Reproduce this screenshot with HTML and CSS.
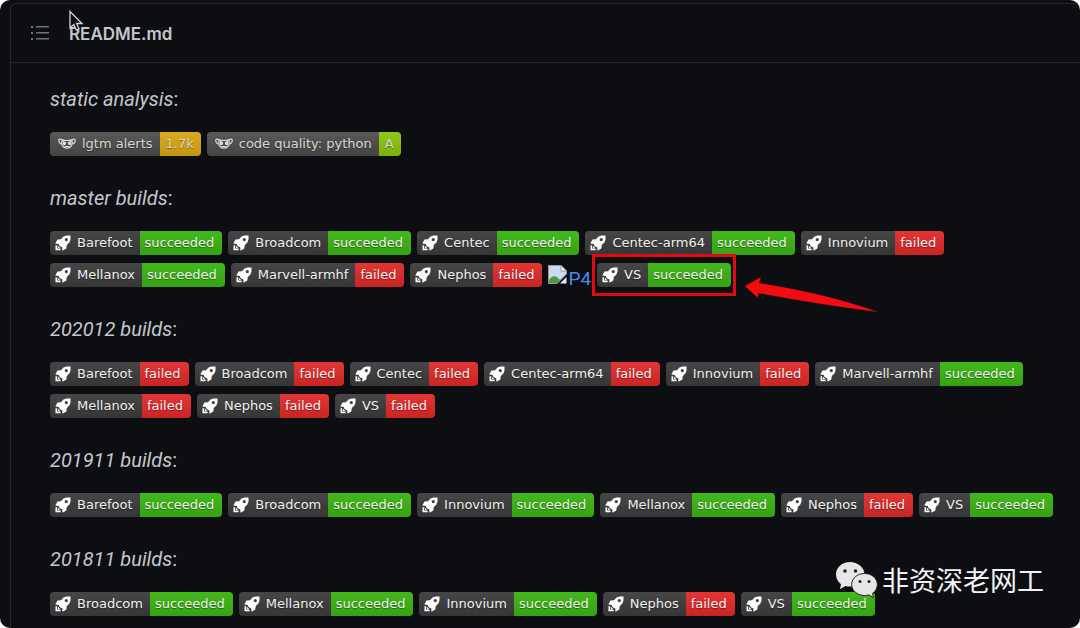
FILE: index.html
```
<!DOCTYPE html>
<html lang="en">
<head>
  <meta charset="UTF-8">
  <title>README.md</title>
  <link rel="stylesheet" href="styles.css">
</head>
<body>

  <svg class="sprite" aria-hidden="true">
    <symbol id="rocket" viewBox="0 0 16 16">
      <path fill="#fff" fill-rule="evenodd" d="M15.500.5H11.500L8.500 1.600 6 4.200 2.500 4.600 .3 8.600 3.800 9 4.200 10.400 5.600 11.800 7.200 12.300 7.500 15.800 11.300 13.500 11.800 10 14.400 7.500 15.500 4.500ZM11.300 3a1.600 1.600 0 1 1 0 3.200a1.600 1.600 0 1 1 0-3.200Z"/>
      <path fill="#fff" d="M.5 10.200h1.700v3.400h3.400v1.700H.5Z"/>
      <path fill="#fff" d="M3 10.800l2.200 2.200H3Z"/>
    </symbol>
    <symbol id="lgtm" viewBox="0 0 18 12">
      <g fill="none" stroke="#ddd" stroke-width="1.200">
        <path d="M4.200 1.800C2 .6.700 1 .7 2.500c0 1.700 1 2.900 2.600 3.600M13.800 1.800c2.200-1.200 3.500-.8 3.500.7 0 1.700-1 2.900-2.600 3.600"/>
        <path d="M4.200 1.800C7 2.600 11 2.600 13.800 1.800c1.300 4-.2 8.400-4.800 8.400S2.900 5.800 4.200 1.800Z"/>
        <path d="M4.500 3l3.500 2M13.500 3l-3.500 2M6.500 8.500h5"/>
      </g>
      <circle cx="6.300" cy="5.500" r="1.700" fill="#ddd"/>
      <circle cx="11.700" cy="5.500" r="1.700" fill="#ddd"/>
    </symbol>
  </svg>

  <div class="page">
    <div class="readme">
      <header class="readme-header">
        <button type="button" class="toc-btn" aria-label="Table of contents">
          <svg width="18" height="16" viewBox="0 0 18 16">
            <path fill="#6e747c" d="M0 1h2v2H0zM5 1h13v1.500H5zM0 7h2v2H0zM5 7h13v1.500H5zM0 13h2v2H0zM5 13h13v1.500H5z"/>
          </svg>
        </button>
        <h1 class="file-name">README.md</h1>
        <svg class="cursor" width="15" height="22" viewBox="0 0 15 22" aria-hidden="true">
          <path fill="#0d0e12" stroke="#d8d8d8" stroke-width="1.300" d="M1 1.500V18l3.800-3.500 2.400 5.500 2.800-1.200-2.400-5.300H13Z"/>
        </svg>
      </header>

      <main class="readme-body" id="readme-body">
        <p class="title"><em>static analysis</em>:</p>
        <div class="badges">
          <a href="#" class="badge lgtm"><span class="label"><svg class="icon"><use href="#lgtm"/></svg>lgtm alerts</span><span class="status alerts">1.7k</span></a>
          <a href="#" class="badge lgtm"><span class="label"><svg class="icon"><use href="#lgtm"/></svg>code quality: python</span><span class="status grade">A</span></a>
        </div>
      </main>
    </div>

    <div class="watermark">
      <svg width="43" height="38" viewBox="0 0 43 38" aria-hidden="true">
        <path fill="#e6e6e6" d="M15 1C7 1 1 6.500 1 13.500c0 4 2 7.500 5 9.700L5 28l5.500-3c1.500.4 3 .6 4.500.6 8 0 14.500-5.400 14.500-12.200S23 1 15 1Z"/>
        <path fill="#e6e6e6" stroke="#222" stroke-width="1" d="M29.500 12.500c-7.200 0-12.800 4.900-12.800 11s5.600 11 12.800 11c1.500 0 2.900-.2 4.200-.6l5 2.800-1.200-4.300c2.900-2 4.800-5.200 4.800-8.900 0-6.100-5.600-11-12.800-11Z"/>
        <g fill="#222">
          <circle cx="10" cy="10" r="1.800"/><circle cx="20.500" cy="10" r="1.800"/>
          <circle cx="25" cy="20.500" r="1.500"/><circle cx="34" cy="20.500" r="1.500"/>
        </g>
      </svg>
      <span lang="zh">非资深老网工</span>
    </div>
  </div>

  <script src="script.js"></script>
</body>
</html>
```

FILE: styles.css
```
html, body {
  margin: 0;
  padding: 0;
  background: #fff;
}
.sprite {
  position: absolute;
  width: 0;
  height: 0;
}
.page {
  position: relative;
  display: flex;
  flex-direction: column;
  min-height: 100vh;
  box-sizing: border-box;
  padding: 3px 0 0 10px;
  overflow: hidden;
  border-radius: 10px;
  background: #0d0e12;
  color: #c3c7cd;
  font-family: Inter, "Noto Sans", sans-serif;
}
.readme {
  flex: 1;
  border: 1px solid #24272c;
  border-width: 1px 0 0 1px;
  border-radius: 6px 0 0 0;
}

.readme-header {
  position: relative;
  display: flex;
  align-items: center;
  gap: 20px;
  height: 58px;
  padding: 0 20px;
  border-bottom: 1px solid #24272c;
}
.toc-btn {
  display: flex;
  padding: 0;
  border: none;
  background: none;
  cursor: pointer;
}
.file-name {
  margin: 0;
  padding-top: 2px;
  font-size: 17px;
  font-weight: 600;
}
.cursor {
  position: absolute;
  top: 6px;
  left: 58px;
}

.readme-body {
  padding: 21px 20px 0 39px;
}
.title {
  margin: 0 0 18px;
  font: 20px/30px Roboto, sans-serif;
}

.badges {
  display: flex;
  flex-wrap: wrap;
  gap: 8px 6px;
  margin-bottom: 27px;
}
.badges:last-child {
  margin-bottom: 0;
}
.badge {
  position: relative;
  display: flex;
  height: 24px;
  border-radius: 4px;
  color: #f0f0f0;
  font: 13px/24px "DejaVu Sans", sans-serif;
  text-decoration: none;
  text-shadow: 0 1px 1px rgba(0,0,0,0.4);
}
.label {
  display: flex;
  align-items: center;
  padding: 0 7px 0 5px;
  border-radius: 4px 0 0 4px;
  background: linear-gradient(#464646, #363636);
}
.icon {
  width: 16px;
  height: 16px;
  margin-right: 6px;
}
.status {
  padding: 0 8px 0 5px;
  border-radius: 0 4px 4px 0;
}
.succeeded {
  background: linear-gradient(#44b71d, #36a312);
}
.failed {
  background: linear-gradient(#e23636, #c92424);
}

.lgtm {
  color: #d8d8d8;
}
.lgtm .label {
  padding: 0 7px 0 8px;
  background: linear-gradient(#595959, #434343);
}
.lgtm .icon {
  width: 18px;
  height: 12px;
}
.lgtm .status {
  padding: 0 7px 0 6px;
}
.alerts {
  background: linear-gradient(#dbab20, #c4960f);
}
.grade {
  background: linear-gradient(#92c81a, #7bb008);
}

.broken-img {
  display: flex;
  align-items: center;
  height: 24px;
  color: #4a8ae8;
  font: 19px/24px Roboto, sans-serif;
  text-decoration: none;
}
.broken-img span {
  padding-top: 8px;
}

/* red box and arrow drawn over the VS badge */
.marked::before {
  content: "";
  position: absolute;
  inset: -9px -5px -9px -5px;
  border: 3px solid #e00a12;
}
.arrow {
  position: absolute;
  top: 13px;
  left: 147px;
}

.watermark {
  position: absolute;
  right: 36px;
  bottom: 29px;
  display: flex;
  align-items: center;
  gap: 4px;
  color: #f2f2f2;
  font: 27px/38px "Noto Sans CJK SC", sans-serif;
}
```

FILE: script.js
```
// [name, 1 = succeeded / 0 = failed / null = badge image missing]
const builds = [
  ["master", [["Barefoot", 1], ["Broadcom", 1], ["Centec", 1], ["Centec-arm64", 1], ["Innovium", 0], ["Mellanox", 1], ["Marvell-armhf", 0], ["Nephos", 0], ["P4", null], ["VS", 1, "marked"]]],
  ["202012", [["Barefoot", 0], ["Broadcom", 0], ["Centec", 0], ["Centec-arm64", 0], ["Innovium", 0], ["Marvell-armhf", 1], ["Mellanox", 0], ["Nephos", 0], ["VS", 0]]],
  ["201911", [["Barefoot", 1], ["Broadcom", 1], ["Innovium", 1], ["Mellanox", 1], ["Nephos", 0], ["VS", 1]]],
  ["201811", [["Broadcom", 1], ["Mellanox", 1], ["Innovium", 1], ["Nephos", 0], ["VS", 1]]]
];

const brokenImg = `<svg width="20" height="20" viewBox="0 0 20 20" aria-hidden="true">
  <path fill="#c9daf2" stroke="#9a9a9a" d="M.5.5H13L18.500 6v3L9 18.500H.5Z"/>
  <path fill="#4f9a3c" d="M1 18v-3c2-4 6-5 9-2l2 2-3 3Z"/>
  <path fill="#fff" stroke="#9a9a9a" d="M13 .5V6h5.500Z"/>
  <path fill="#e8eef5" d="M18.500 12v6.500H12Z"/>
</svg>`;

const arrow = `<svg class="arrow" width="136" height="38" viewBox="0 0 136 38" aria-hidden="true">
  <path fill="#f40b12" d="M1 10 17 1 15 7 Q84 18 134 36 Q72 28 14 17L14 22Z"/>
</svg>`;

function badge([name, ok, extra]) {
  if (ok === null) {
    return `<a href="#" class="broken-img">${brokenImg}<span>${name}</span></a>`;
  }
  const status = ok ? "succeeded" : "failed";
  return `<a href="#" class="badge ${extra || ""}"><span class="label"><svg class="icon"><use href="#rocket"/></svg>${name}</span><span class="status ${status}">${status}</span>${extra ? arrow : ""}</a>`;
}

document.getElementById("readme-body").insertAdjacentHTML("beforeend", builds.map(([branch, list]) =>
  `<p class="title"><em>${branch} builds</em>:</p><div class="badges">${list.map(badge).join("")}</div>`
).join(""));
```
